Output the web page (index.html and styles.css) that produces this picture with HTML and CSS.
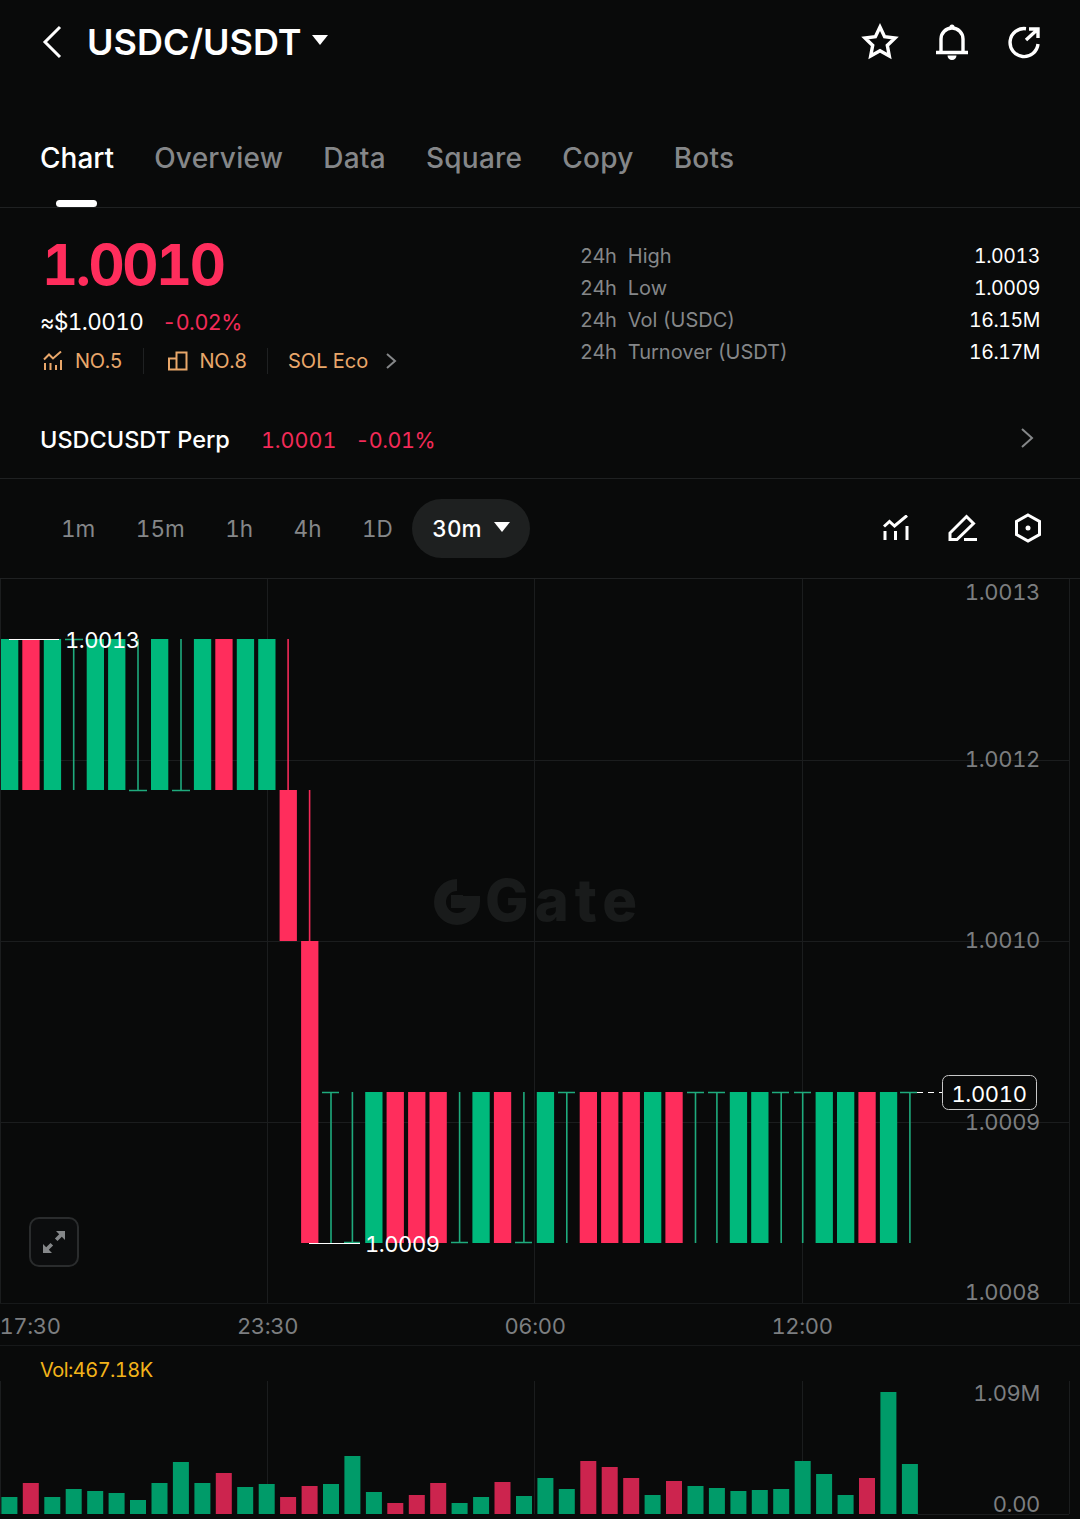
FILE: index.html
```html
<!DOCTYPE html>
<html lang="en">
<head>
  <meta charset="UTF-8" />
  <title>USDC/USDT</title>
  <link rel="stylesheet" href="styles.css">
</head>
<body>
  <header class="top-bar">
    <div class="pair">
      <svg class="back" width="20" height="34" viewBox="0 0 20 34"><path d="M18 2 3 17l15 15" /></svg>
      <span class="pair-name">USDC/USDT</span>
      <span class="caret"></span>
    </div>
    <div class="top-icons">
      <svg width="38" height="38" viewBox="0 0 38 38"><path d="m19 4 4.6 9.8 10.4 1.3-7.7 7.3 2 10.6L19 27.8 9.7 33l2-10.6L4 15.100l10.400-1.300z" /></svg>
      <svg width="38" height="38" viewBox="0 0 38 38"><path d="M3 29.500h32M8 29V16a11 11 0 0 1 22 0v13" /><path class="solid" d="M19 1.500a2.500 2.500 0 0 1 2.500 2.500h-5a2.500 2.500 0 0 1 2.500-2.500zM14.500 32.500h9a4.500 4.500 0 0 1-9 0z" /></svg>
      <svg width="38" height="38" viewBox="0 0 38 38"><path d="M21 5.700A14 14 0 1 0 33 21M21 17 33 6M24 6h9v9" /></svg>
    </div>
  </header>

  <nav class="tabs">
    <a class="tab active">Chart</a>
    <a class="tab">Overview</a>
    <a class="tab">Data</a>
    <a class="tab">Square</a>
    <a class="tab">Copy</a>
    <a class="tab">Bots</a>
  </nav>

  <section class="summary">
    <div class="price-col">
      <div class="last-price">1.0010</div>
      <div class="price-sub">
        <span class="usd">≈$1.0010</span>
        <span class="down">-0.02%</span>
      </div>
      <div class="tags">
        <span class="tag">
          <svg width="20" height="20" viewBox="0 0 20 20"><path d="M1 8.500 6 3.500l4 4L18 0.500M2 12v7M7.500 12v7M13 14v5M18 9v10" /></svg>
          NO.5
        </span>
        <span class="tag">
          <svg width="20" height="20" viewBox="0 0 20 20"><path d="M1 7.500h7.500V18.500H1zM8.500 18.500h10V1.500h-10v6" /></svg>
          NO.8
        </span>
        <span class="tag">
          SOL Eco
          <svg class="tag-more" width="12" height="18" viewBox="0 0 12 18"><path d="m2 2 8 7-8 7" /></svg>
        </span>
      </div>
    </div>
    <dl class="stats">
      <div class="stat"><dt><span>24h</span>High</dt><dd>1.0013</dd></div>
      <div class="stat"><dt><span>24h</span>Low</dt><dd>1.0009</dd></div>
      <div class="stat"><dt><span>24h</span>Vol (USDC)</dt><dd>16.15M</dd></div>
      <div class="stat"><dt><span>24h</span>Turnover (USDT)</dt><dd>16.17M</dd></div>
    </dl>
  </section>

  <section class="perp">
    <span class="perp-name">USDCUSDT Perp</span>
    <span class="down perp-price">1.0001</span>
    <span class="down">-0.01%</span>
    <svg class="perp-more" width="14" height="22" viewBox="0 0 14 22"><path d="m2 2 10 9-10 9" /></svg>
  </section>

  <section class="intervals">
    <div class="interval-list">
      <span class="interval">1m</span>
      <span class="interval">15m</span>
      <span class="interval">1h</span>
      <span class="interval">4h</span>
      <span class="interval">1D</span>
      <span class="interval-active">30m<i class="caret small"></i></span>
    </div>
    <div class="chart-tools">
      <svg width="26" height="26" viewBox="0 0 26 26"><path d="M1 11.500 6.500 6.500l5 4.500L24 0.500M2 16v9M12.500 16v9M24 11v14" /></svg>
      <svg width="30" height="28" viewBox="0 0 30 28"><path d="M2 25.500V19L18.500 2.500l7 7L9 25.500zM16 25.500h13" /></svg>
      <svg width="28" height="30" viewBox="0 0 28 30"><path d="m14 2 11.500 6.500v13L14 28 2.500 21.500v-13z" /><circle class="solid" cx="14" cy="15" r="2.500" /></svg>
    </div>
  </section>

  <section class="chart">
    <svg class="chart-canvas" width="1080" height="940" viewBox="0 579 1080 940">
      <!-- grid -->
      <path class="grid" d="M0.500 579V1303M267.500 579V1303M534.500 579V1303M802.500 579V1303M1069.500 579V1303" />
      <path class="grid" d="M0 760.500H1069M0 941.500H1069M0 1122.500H1069" />
      <path class="grid soft" d="M0 1303.500H1080M0 1345.500H1080" />
      <path class="grid" d="M0.500 1381V1514M267.500 1381V1514M534.500 1381V1514M802.500 1381V1514M1069.500 1381V1514M917 1514.500H1069" />

      <!-- watermark -->
      <g class="watermark">
        <path d="M457 902m-17 0a17 17 0 1 0 34 0h-17v-7" />
        <path d="M457 885a17 17 0 0 0-17 17" />
        <text x="485" y="921">Gate</text>
      </g>

      <!-- candles -->
      <g class="up">
        <rect x="1" y="639" width="17.300" height="151" />
        <rect x="43.800" y="639" width="17.300" height="151" />
        <rect x="86.700" y="639" width="17.300" height="151" />
        <rect x="108.100" y="639" width="17.300" height="151" />
        <rect x="151" y="639" width="17.300" height="151" />
        <rect x="193.900" y="639" width="17.300" height="151" />
        <rect x="236.800" y="639" width="17.300" height="151" />
        <rect x="258.200" y="639" width="17.300" height="151" />
        <rect x="365.200" y="1092" width="17.300" height="151" />
        <rect x="472.400" y="1092" width="17.300" height="151" />
        <rect x="536.800" y="1092" width="17.300" height="151" />
        <rect x="644" y="1092" width="17.300" height="151" />
        <rect x="729.800" y="1092" width="17.300" height="151" />
        <rect x="751.200" y="1092" width="17.300" height="151" />
        <rect x="815.600" y="1092" width="17.300" height="151" />
        <rect x="837" y="1092" width="17.300" height="151" />
        <rect x="879.900" y="1092" width="17.300" height="151" />
      </g>
      <g class="dn">
        <rect x="22.300" y="639" width="17.300" height="151" />
        <rect x="215.300" y="639" width="17.300" height="151" />
        <rect x="279.600" y="790" width="17.300" height="151" />
        <rect x="301.100" y="941" width="17.300" height="302" />
        <rect x="386.600" y="1092" width="17.300" height="151" />
        <rect x="408.100" y="1092" width="17.300" height="151" />
        <rect x="429.500" y="1092" width="17.300" height="151" />
        <rect x="493.900" y="1092" width="17.300" height="151" />
        <rect x="579.700" y="1092" width="17.300" height="151" />
        <rect x="601.100" y="1092" width="17.300" height="151" />
        <rect x="622.600" y="1092" width="17.300" height="151" />
        <rect x="665.400" y="1092" width="17.300" height="151" />
        <rect x="858.400" y="1092" width="17.300" height="151" />
      </g>
      <path class="wick-up" d="M73.700 639V790M65 639.500H83M138 639V790M129 790.500H147M181 639V790M172 790.500H190" />
      <path class="wick-up" d="M331 1092V1243M322 1092.500H339M352.400 1092V1243M344 1242.500H360M459.600 1092V1243M451 1242.500H468M523.900 1092V1243M515 1242.500H532M566.800 1092V1243M558 1092.500H575M695.500 1092V1243M687 1092.500H704M716.900 1092V1243M708 1092.500H725M781.200 1092V1243M772 1092.500H789M802.700 1092V1243M794 1092.500H811M909.900 1092V1243M900 1092.500H917" />
      <path class="wick-dn" d="M288.100 639V790M309.600 790V941" />

      <!-- high / low marks -->
      <path class="mark" d="M9 639.500H59M309 1243.500H360" />
      <text class="mark-text" x="65" y="648">1.0013</text>
      <text class="mark-text" x="365" y="1252">1.0009</text>

      <!-- last price -->
      <path class="last-line" d="M917 1092.500H942" />
      <rect class="last-box" x="942.500" y="1075.500" width="94" height="34" rx="6" />
      <text class="last-text" x="989" y="1102">1.0010</text>

      <!-- axis labels -->
      <g class="axis axis-y">
        <text x="1040" y="600">1.0013</text>
        <text x="1040" y="767">1.0012</text>
        <text x="1040" y="948">1.0010</text>
        <text x="1040" y="1130">1.0009</text>
        <text x="1040" y="1300">1.0008</text>
        <text x="1040" y="1401">1.09M</text>
        <text x="1040" y="1512">0.00</text>
      </g>
      <g class="axis axis-x">
        <text x="30" y="1334">17:30</text>
        <text x="267.500" y="1334">23:30</text>
        <text x="535" y="1334">06:00</text>
        <text x="802" y="1334">12:00</text>
      </g>
      <text class="vol-label" x="40" y="1377">Vol:467.18K</text>

      <!-- volume -->
      <g class="vol-up">
        <rect x="1.400" y="1497" width="16" height="17" />
        <rect x="44.300" y="1497" width="16" height="17" />
        <rect x="65.700" y="1489" width="16" height="25" />
        <rect x="87.200" y="1491" width="16" height="23" />
        <rect x="108.600" y="1493" width="16" height="21" />
        <rect x="130" y="1500" width="16" height="14" />
        <rect x="151.500" y="1483" width="16" height="31" />
        <rect x="172.900" y="1462" width="16" height="52" />
        <rect x="194.400" y="1483" width="16" height="31" />
        <rect x="237.200" y="1487" width="16" height="27" />
        <rect x="258.700" y="1484" width="16" height="30" />
        <rect x="323" y="1484" width="16" height="30" />
        <rect x="344.400" y="1456" width="16" height="58" />
        <rect x="365.900" y="1492" width="16" height="22" />
        <rect x="451.600" y="1503" width="16" height="11" />
        <rect x="473.100" y="1497" width="16" height="17" />
        <rect x="516" y="1496" width="16" height="18" />
        <rect x="537.400" y="1478" width="16" height="36" />
        <rect x="558.800" y="1489" width="16" height="25" />
        <rect x="644.600" y="1495" width="16" height="19" />
        <rect x="687.500" y="1486" width="16" height="28" />
        <rect x="708.900" y="1488" width="16" height="26" />
        <rect x="730.400" y="1491" width="16" height="23" />
        <rect x="751.800" y="1490" width="16" height="24" />
        <rect x="773.200" y="1489" width="16" height="25" />
        <rect x="794.700" y="1461" width="16" height="53" />
        <rect x="816.100" y="1474" width="16" height="40" />
        <rect x="837.600" y="1495" width="16" height="19" />
        <rect x="880.400" y="1392" width="16" height="122" />
        <rect x="901.900" y="1464" width="16" height="50" />
      </g>
      <g class="vol-dn">
        <rect x="22.800" y="1483" width="16" height="31" />
        <rect x="215.800" y="1473" width="16" height="41" />
        <rect x="280.100" y="1497" width="16" height="17" />
        <rect x="301.600" y="1486" width="16" height="28" />
        <rect x="387.300" y="1503" width="16" height="11" />
        <rect x="408.800" y="1495" width="16" height="19" />
        <rect x="430.200" y="1483" width="16" height="31" />
        <rect x="494.500" y="1482" width="16" height="32" />
        <rect x="580.300" y="1461" width="16" height="53" />
        <rect x="601.700" y="1467" width="16" height="47" />
        <rect x="623.200" y="1478" width="16" height="36" />
        <rect x="666" y="1481" width="16" height="33" />
        <rect x="859" y="1478" width="16" height="36" />
      </g>
    </svg>

    <button class="fullscreen">
      <svg width="26" height="26" viewBox="0 0 26 26"><path d="M15 2h9v9l-3.200-3.200-4.300 4.300-2.600-2.600 4.300-4.300zM11 24H2v-9l3.200 3.200 4.300-4.300 2.600 2.600-4.300 4.300z" /></svg>
    </button>
  </section>
</body>
</html>
```

FILE: styles.css
```css
body {
  font-family: Inter, "Liberation Sans", sans-serif;
  font-variant-numeric: tabular-nums;
  background: #090a0a;
  color: white;
  margin: 0;
  width: 1080px;
  height: 1519px;
  overflow: hidden;
}

svg path {
  fill: none;
  stroke: currentColor;
  stroke-width: 3;
}

svg .solid {
  fill: currentColor;
  stroke: none;
}

.top-bar {
  display: flex;
  justify-content: space-between;
  align-items: center;
  height: 84px;
  padding: 0 37px 0 42px;
}

.pair {
  display: flex;
  align-items: center;
}

.pair-name {
  font-size: 36px;
  font-weight: 600;
  margin-left: 25px;
}

.caret {
  width: 0;
  height: 0;
  margin: 0 0 4px 10px;
  border-left: 8px solid transparent;
  border-right: 8px solid transparent;
  border-top: 10px solid white;
}

.caret.small {
  display: inline-block;
  margin: 0 0 3px 12px;
}

.top-icons {
  display: flex;
  gap: 34px;
}

.top-icons path {
  stroke-width: 3.4;
}

.top-icons .solid {
  stroke: none;
}

.tabs {
  display: flex;
  gap: 40px;
  height: 124px;
  box-sizing: border-box;
  padding: 56px 40px 0;
  border-bottom: 1px solid #1f2122;
  font-size: 28px;
  font-weight: 500;
  letter-spacing: 0.25px;
  color: #858789;
}

.tab {
  position: relative;
  line-height: 36px;
}

.tab.active {
  color: white;
  letter-spacing: 0;
}

.tab.active::after {
  content: "";
  position: absolute;
  left: 16px;
  top: 60px;
  width: 41px;
  height: 7px;
  border-radius: 4px;
  background: white;
}

.summary {
  display: flex;
  justify-content: space-between;
  height: 201px;
  box-sizing: border-box;
  padding: 24px 40px 0;
}

.last-price {
  font-size: 56px;
  font-weight: 700;
  line-height: 66px;
  color: #ff2d5c;
  margin-left: 2px;
  letter-spacing: -2.400px;
}

.price-sub {
  display: flex;
  gap: 19px;
  margin-top: 9px;
  font-size: 22.500px;
  line-height: 30px;
  letter-spacing: -0.600px;
}

.down {
  color: #f32a58;
  font-size: 21.500px;
  letter-spacing: -0.500px;
}

.tags {
  display: flex;
  margin-top: 9px;
  font-size: 20px;
  line-height: 30px;
  color: #e9a76a;
}

.tag {
  display: flex;
  align-items: center;
  gap: 12px;
  height: 26px;
  margin-top: 2px;
  padding: 0 20px 0 3px;
  border-right: 1px solid #1f2122;
  letter-spacing: -0.300px;
}

.tag + .tag {
  padding-left: 24px;
}

.tag:last-child {
  border-right: 0;
  padding-left: 20px;
  gap: 17px;
  letter-spacing: 0;
}

.tag svg path {
  stroke-width: 2;
}

.tag .tag-more {
  color: #858789;
}

.stats {
  width: 460px;
  margin: 8px 0 0;
  font-size: 20px;
}

.stat {
  display: flex;
  justify-content: space-between;
  height: 32px;
  line-height: 32px;
}

.stat dt {
  color: #858789;
}

.stat dt span {
  margin-right: 11.500px;
  letter-spacing: -0.500px;
}

.stat dd {
  margin: 0;
  font-size: 19.500px;
  letter-spacing: -0.400px;
}

.perp {
  display: flex;
  align-items: center;
  height: 70px;
  padding: 0 46px 8px 40px;
  box-sizing: border-box;
  border-bottom: 1px solid #1f2122;
  font-size: 22.500px;
}

.perp-name {
  font-size: 23.500px;
  font-weight: 500;
  margin-right: 31px;
}

.perp-price {
  margin-right: 19px;
  letter-spacing: 0;
}

.perp-more {
  margin: 0 0 4px auto;
  color: #858789;
}

.perp-more path {
  stroke-width: 2;
}

.intervals {
  display: flex;
  justify-content: space-between;
  align-items: center;
  height: 100px;
  box-sizing: border-box;
  padding: 0 38px 0 61px;
  border-bottom: 1px solid #1f2122;
  font-size: 22.500px;
}

.interval-list {
  display: flex;
  align-items: center;
  gap: 40.500px;
  color: #858789;
}

.interval-active {
  display: flex;
  align-items: center;
  height: 59px;
  margin-left: -21px;
  padding: 0 20px;
  border-radius: 30px;
  background: #1e2020;
  color: white;
  font-weight: 500;
}

.chart-tools {
  display: flex;
  align-items: center;
  gap: 36px;
  padding-bottom: 2px;
}

.chart-tools svg:first-child {
  margin-right: 3px;
}

.chart {
  position: relative;
}

.chart-canvas {
  display: block;
}

.grid {
  stroke: #1b1d1e;
  stroke-width: 1;
}

.grid.soft {
  stroke: #17191a;
  stroke-width: 1;
}

.watermark {
  color: #191b1b;
  fill: #191b1b;
  font-size: 58px;
  font-weight: 800;
  letter-spacing: 6px;
}

.watermark path {
  stroke-width: 12;
}

.up {
  fill: #00b97c;
}

.dn {
  fill: #ff2d5c;
}

.wick-up {
  stroke: #1fab7d;
  stroke-width: 1.6;
}

.wick-dn {
  stroke: #f32a58;
  stroke-width: 1.6;
}

.mark {
  stroke: white;
  stroke-width: 1;
}

.mark-text {
  fill: white;
  font-size: 22px;
  letter-spacing: -0.450px;
}

.last-line {
  stroke: white;
  stroke-width: 1;
  stroke-dasharray: 6 5;
}

.last-box {
  fill: #090a0a;
  stroke: #c8c8c8;
  stroke-width: 1;
}

.last-text {
  fill: white;
  font-size: 22px;
  text-anchor: middle;
  letter-spacing: -0.350px;
}

.axis {
  fill: #7c7e80;
  font-size: 22px;
  letter-spacing: -0.350px;
}

.axis-y {
  text-anchor: end;
}

.axis-x {
  text-anchor: middle;
}

.vol-label {
  fill: #f3b41a;
  font-size: 20px;
  letter-spacing: -0.550px;
}

.vol-up {
  fill: #009b69;
}

.vol-dn {
  fill: #cc244e;
}

.fullscreen {
  position: absolute;
  left: 29px;
  top: 638px;
  display: flex;
  align-items: center;
  justify-content: center;
  width: 50px;
  height: 50px;
  padding: 0;
  border: 2px solid #2a2c2d;
  border-radius: 10px;
  background: #0c0d0e;
  color: #858789;
}

.fullscreen path {
  fill: currentColor;
  stroke: none;
}
```
